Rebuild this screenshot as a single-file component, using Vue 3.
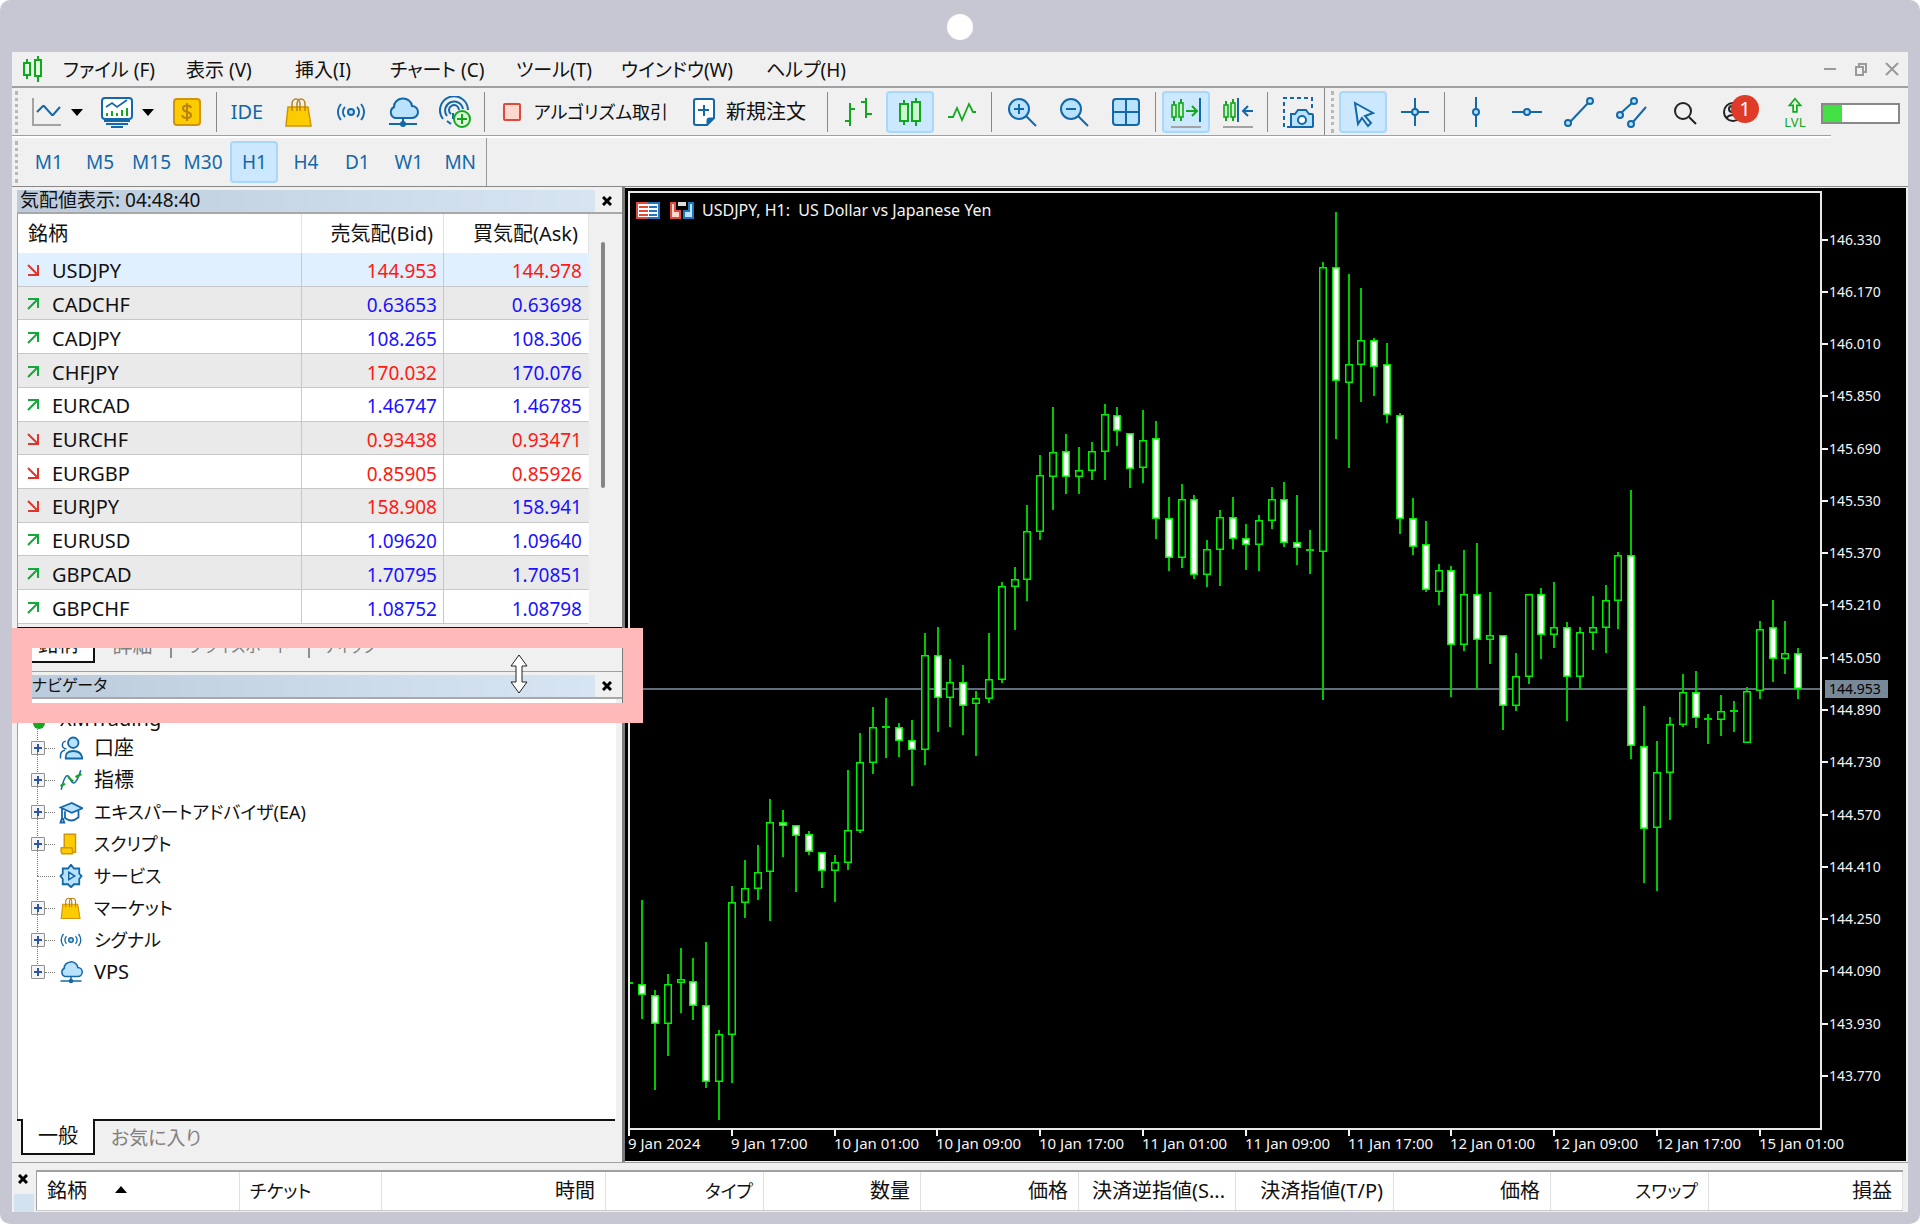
<script setup>
const menus = ['ファイル (F)', '表示 (V)', '挿入(I)', 'チャート (C)', 'ツール(T)', 'ウインドウ(W)', 'ヘルプ(H)']

const blue = '#1268a8'
const green = '#12a81e'
const s = (d, color = blue, fill = 'none', w = 2) =>
  `<path d="${d}" fill="${fill}" stroke="${color}" stroke-width="${w}"/>`
const circle = (x, y, r, color = blue, fill = 'none', w = 2) =>
  `<circle cx="${x}" cy="${y}" r="${r}" fill="${fill}" stroke="${color}" stroke-width="${w}"/>`

const bag =
  s('M5 11h20l3 19H3z', '#cf9408', '#fccb00', 1.5) +
  s('M9 15V8a4 5 0 0 1 8 0v7M14 15V8a4 5 0 0 1 8 0v7', '#b98210', 'none', 1.5)
const cloud =
  s('M8 22a6 6 0 0 1-1-11 9 8 0 0 1 18-1 6 6 0 0 1 0 12z', blue, '#b8e2fd') +
  s('M16 22v5M2 28h28', blue) + circle(16, 28, 2, blue, blue)
const signal =
  circle(16, 16, 3, blue, '#b8e2fd') +
  s('M10 11a7 7 0 0 0 0 10M22 11a7 7 0 0 1 0 10M6 8a12 12 0 0 0 0 16M26 8a12 12 0 0 1 0 16', blue, 'none', 1.8)

const icons = {
  line: s('M3 2v27h28', '#a3a3a3') + s('M7 16l6-6h1l8 9h1l7-8'),
  chart:
    '<rect x="1" y="2" width="30" height="21" rx="3" fill="#fff" stroke="#1268a8" stroke-width="2"/>' +
    s('M5 11l6-4 5 4 10-7', blue, 'none', 1.8) +
    s('M6 17v3M11 15v5M16 17v3M21 14v6M26 12v8', green) +
    s('M3 25h26M5 28h22M10 31h12', blue),
  dollar:
    '<rect x="3" y="3" width="26" height="26" rx="3" fill="#fccb00" stroke="#cf9408" stroke-width="2"/>' +
    s('M20 12c-1-4-9-3-8 1s8 2 8 6-8 4-9 0M16 7v18', '#b98210'),
  bag, cloud, signal,
  radar:
    s('M4 23A14 14 0 1 1 29 14M8 20a9 9 0 1 1 16-7M12 18a5 5 0 1 1 8-4', blue, 'none', 2) +
    s('M14 17v6M8 25l4 3', blue) +
    circle(23, 23, 8, green, '#dff6dc') + s('M23 18v10M18 23h10', green),
  stop: '<rect x="8" y="8" width="16" height="16" rx="1" fill="#ffd9cf" stroke="#e04a3a" stroke-width="2"/>',
  doc:
    s('M6 5q0-2 2-2h16q2 0 2 2v17l-7 7H8q-2 0-2-2z', blue, '#fff') +
    s('M26 22l-7 7v-5q0-2 2-2z', blue, blue, 1) + s('M16 9v11M10 14h11'),
  bars: s('M8 7v23M8 13h5M3 25h5M24 2v20M19 6h5M24 18h6', green),
  candles: s('M10 4v25M22 2v28', green) +
    '<rect x="6" y="8" width="8" height="17" fill="#cdf5cf" stroke="#12a81e" stroke-width="2"/><rect x="18" y="6" width="8" height="19" fill="#cdf5cf" stroke="#12a81e" stroke-width="2"/>',
  zigzag: s('M2 21h5l4-9 5 12 7-16 4 8h3', green, 'none', 1.8),
  zoomIn: circle(13, 13, 10, blue, '#b8e2fd') + s('M20 20l10 10M13 8v10M8 13h10'),
  zoomOut: circle(13, 13, 10, blue, '#b8e2fd') + s('M20 20l10 10M8 13h10'),
  grid: '<rect x="3" y="3" width="26" height="26" rx="3" fill="#b8e2fd" stroke="#1268a8" stroke-width="2"/>' + s('M16 3v26M3 16h26'),
  autoscroll: s('M4 5v20M11 3v22', green) +
    '<rect x="2" y="9" width="4" height="12" fill="#cdf5cf" stroke="#12a81e" stroke-width="1.6"/><rect x="9" y="7" width="4" height="14" fill="#cdf5cf" stroke="#12a81e" stroke-width="1.6"/>' +
    s('M16 15h10M22 10l5 5-5 5', green) + s('M30 2v24') + s('M1 31h30', '#a3a3a3'),
  shift: s('M4 5v20M11 3v22', green) +
    '<rect x="2" y="9" width="4" height="12" fill="#cdf5cf" stroke="#12a81e" stroke-width="1.6"/><rect x="9" y="7" width="4" height="14" fill="#cdf5cf" stroke="#12a81e" stroke-width="1.6"/>' +
    s('M16 2v24') + s('M31 15H21M26 10l-5 5 5 5') + s('M1 31h30', '#a3a3a3'),
  camera:
    '<path d="M9 31H2V2h28v10" fill="none" stroke="#1268a8" stroke-width="2" stroke-dasharray="4 3"/>' +
    s('M9 18h4l3-4h8l3 4h3q1 0 1 2v10q0 1-2 1H11q-2 0-2-1z', blue, '#b8e2fd') + circle(20, 24, 4, blue, '#fff'),
  cursor: s('M8 7l18 10-8 3 6 7-3 3-6-8-4 6z', blue, '#d9efff'),
  cross: s('M16 2v11M16 19v11M2 16h11M19 16h11') + circle(16, 16, 3, blue, '#b8e2fd'),
  vline: s('M17 1v12M17 19v12') + circle(17, 16, 3, blue, '#b8e2fd'),
  hline: s('M1 16h12M19 16h12') + circle(16, 16, 3, blue, '#b8e2fd'),
  trend: s('M7 26L26 6') + circle(5, 27, 3, blue, '#b8e2fd') + circle(27, 5, 3, blue, '#b8e2fd'),
  parallel: s('M6 17L18 6M18 26L31 11') + circle(5, 19, 3, blue, '#b8e2fd') + circle(19, 5, 3, blue, '#b8e2fd') + circle(16, 28, 3, blue, '#b8e2fd'),
  search: circle(16, 15, 8, '#222') + s('M22 21l7 7', '#222'),
  user: circle(14, 16, 9, '#222') + circle(13, 13, 3, '#222') + s('M7 22q6-6 13 0', '#222'),
  levels: s('M14 18v-7h-4l6-7 6 7h-4v7z', green, '#dff6dc', 1.8),
  people:
    s('M2 30v-4q0-6 6-7M10 17a5 5 0 0 1-1-10', blue) + circle(19, 9, 7, blue, '#b8e2fd', 2.4) +
    s('M9 30q-1-10 10-10t12 10z', blue, '#b8e2fd', 2.4),
  indicator: s('M3 29Q9 1 15 15t14-12', blue) + s('M2 24l6-3M12 12l7 6M22 12l8-4', green, 'none', 3),
  hat: s('M2 10l15-6 14 7-14 6z', blue, '#b8e2fd', 2.4) + s('M8 15v9q9 7 18-1v-9M4 12v12l-2 6h5l-2-6', blue, 'none', 2.4),
  script: s('M7 3h15v24H7z', '#cf9408', '#fccb00') + s('M3 21h14l1 2v6H4q-2-4-1-8z', '#cf9408', '#fccb00'),
  gear:
    s('M16 1l4 5h7v7l3 3-3 4v7h-7l-4 4-4-4H5v-7l-3-4 3-3V6h7z', blue, '#b8e2fd', 2.4) +
    s('M13 11l8 5-8 5z', blue, '#d9efff')
}

const tools = [
  { i: 'line', l: 'ライン', k: 'split' }, { i: 'chart', l: 'チャート種類', k: 'split' }, { i: 'dollar', l: '口座' }, { k: 'sep' },
  { t: 'IDE', k: 'ide' }, { i: 'bag', l: 'マーケット' }, { i: 'signal', l: 'シグナル' }, { i: 'cloud', l: 'VPS' }, { i: 'radar', l: '接続' }, { k: 'sep' },
  { i: 'stop', t: 'アルゴリズム取引', k: 'wide algo' }, { i: 'doc', t: '新規注文', k: 'wide order' }, { k: 'sep' },
  { i: 'bars', l: 'バーチャート' }, { i: 'candles', l: 'ローソク足', on: true }, { i: 'zigzag', l: '折れ線' }, { k: 'sep' },
  { i: 'zoomIn', l: '拡大' }, { i: 'zoomOut', l: '縮小' }, { i: 'grid', l: '整列' }, { k: 'sep' },
  { i: 'autoscroll', l: '自動スクロール', on: true }, { i: 'shift', l: 'チャートシフト' }, { k: 'sep' },
  { i: 'camera', l: 'スクリーンショット' }, { k: 'edge' }, { k: 'grip' },
  { i: 'cursor', l: 'カーソル', on: true }, { i: 'cross', l: '十字線' }, { k: 'sep' },
  { i: 'vline', l: '垂直線' }, { i: 'hline', l: '水平線' }, { i: 'trend', l: 'トレンドライン' }, { i: 'parallel', l: 'チャネル' },
  { i: 'search', l: '検索' }, { i: 'user', l: '通知', badge: '1' }, { i: 'levels', t: 'LVL', k: 'lvl' }
]

const frames = ['M1', 'M5', 'M15', 'M30', 'H1', 'H4', 'D1', 'W1', 'MN']

// symbol, bid, ask, trend (u/d), bid colour, ask colour
const quotes = [
  ['USDJPY', '144.953', '144.978', 'd', 'r', 'r'],
  ['CADCHF', '0.63653', '0.63698', 'u', 'b', 'b'],
  ['CADJPY', '108.265', '108.306', 'u', 'b', 'b'],
  ['CHFJPY', '170.032', '170.076', 'u', 'r', 'b'],
  ['EURCAD', '1.46747', '1.46785', 'u', 'b', 'b'],
  ['EURCHF', '0.93438', '0.93471', 'd', 'r', 'r'],
  ['EURGBP', '0.85905', '0.85926', 'd', 'r', 'r'],
  ['EURJPY', '158.908', '158.941', 'd', 'r', 'b'],
  ['EURUSD', '1.09620', '1.09640', 'u', 'b', 'b'],
  ['GBPCAD', '1.70795', '1.70851', 'u', 'b', 'b'],
  ['GBPCHF', '1.08752', '1.08798', 'u', 'b', 'b']
]

const tree = [
  { icon: 'people', label: '口座' },
  { icon: 'indicator', label: '指標' },
  { icon: 'hat', label: 'エキスパートアドバイザ(EA)', kana: true },
  { icon: 'script', label: 'スクリプト', kana: true },
  { icon: 'gear', label: 'サービス', kana: true, leaf: true },
  { icon: 'bag', label: 'マーケット', kana: true },
  { icon: 'signal', label: 'シグナル', kana: true },
  { icon: 'cloud', label: 'VPS' }
]

// high, body top, body bottom, low, 1 = falling
const candles = [
  [900,984,995,1019,1],[990,995,1024,1090,1],[974,984,1024,1056,0],[948,979,983,1013,0],[958,981,1006,1020,1],
  [942,1005,1082,1088,1],[1030,1034,1082,1120,0],[886,902,1035,1083,0],[860,888,903,918,0],[845,872,889,900,0],
  [799,822,872,921,0],[810,822,826,857,1],[825,825,836,892,1],[831,834,852,855,1],[852,852,871,888,1],
  [855,862,871,902,0],[770,830,863,870,0],[733,762,831,833,0],[707,727,763,774,0],[698,727,727,758,0],
  [723,727,741,757,1],[720,740,750,786,1],[633,655,750,765,0],[627,655,698,732,1],[659,682,698,727,0],
  [665,682,706,735,1],[691,698,704,756,0],[633,679,699,703,0],[582,586,680,683,0],[567,579,587,630,0],
  [505,531,580,601,0],[455,475,532,540,0],[407,452,477,510,0],[434,451,477,494,1],[447,470,477,494,0],
  [442,451,471,480,0],[404,414,452,480,0],[407,415,431,446,1],[433,433,469,488,1],[410,440,468,483,0],
  [421,438,519,539,1],[497,518,558,571,1],[484,499,558,568,0],[495,499,575,579,1],[540,549,575,587,0],
  [510,517,550,586,0],[497,517,539,549,1],[524,538,545,570,1],[515,520,545,571,0],[487,499,521,529,0],
  [482,499,543,547,1],[495,542,548,565,1],[530,550,550,574,0],[262,267,552,700,0],[212,267,381,439,1],
  [274,364,383,468,0],[288,340,365,402,0],[338,340,367,396,1],[343,364,415,423,1],[413,415,519,534,1],
  [498,518,547,555,1],[521,544,590,592,1],[564,570,592,605,0],[566,570,645,697,1],[550,594,645,651,0],
  [543,594,640,689,1],[592,635,640,664,0],[635,635,706,730,1],[653,676,706,711,0],[594,594,677,684,0],
  [588,594,635,659,1],[582,627,635,648,0],[622,627,677,721,1],[627,632,677,689,0],[596,627,633,650,0],
  [585,600,628,653,0],[552,555,601,629,0],[490,555,746,759,1],[706,746,829,883,1],[741,772,828,891,0],
  [717,724,773,820,0],[674,692,725,727,0],[671,692,718,728,1],[714,719,719,744,0],[695,711,720,736,0],
  [701,711,711,732,0],[687,691,743,743,0],[621,629,691,699,0],[600,627,659,682,1],[621,653,659,674,0],
  [648,653,689,699,1]
].map(([high, top, bottom, low, down], i) => ({ x: Math.round(642 + i * 12.848), high, top, bottom, low, down }))

const prices = ['146.330', '146.170', '146.010', '145.850', '145.690', '145.530', '145.370', '145.210', '145.050',
  '144.890', '144.730', '144.570', '144.410', '144.250', '144.090', '143.930', '143.770']
  .map((label, i) => ({ label, y: Math.round(238.6 + i * 52.27) }))

const times = ['9 Jan 2024', '9 Jan 17:00', '10 Jan 01:00', '10 Jan 09:00', '10 Jan 17:00', '11 Jan 01:00', '11 Jan 09:00',
  '11 Jan 17:00', '12 Jan 01:00', '12 Jan 09:00', '12 Jan 17:00', '15 Jan 01:00']
  .map((label, i) => ({ label, x: Math.round(629 + i * 102.8) }))

const orderCols = [
  { label: '銘柄', width: 204 }, { label: 'チケット', width: 142, kana: true }, { label: '時間', width: 224 },
  { label: 'タイプ', width: 158, kana: true }, { label: '数量', width: 157 }, { label: '価格', width: 158 },
  { label: '決済逆指値(S...', width: 157 }, { label: '決済指値(T/P)', width: 158 }, { label: '価格', width: 157 },
  { label: 'スワップ', width: 158, kana: true }, { label: '損益' }
]
</script>

<template>
  <div class="device">
    <div class="lens"></div>
    <div class="window">
      <header class="menubar">
        <svg class="logo" viewBox="0 0 24 28">
          <path d="M6 4v20M17 1v26" stroke="#12a81e" stroke-width="2" />
          <rect x="3" y="8" width="6" height="12" fill="#e4fbe4" stroke="#12a81e" stroke-width="2" />
          <rect x="14" y="5" width="6" height="16" fill="#e4fbe4" stroke="#12a81e" stroke-width="2" />
        </svg>
        <nav class="menus">
          <button v-for="m in menus" :key="m" type="button">{{ m }}</button>
        </nav>
        <div class="controls">
          <button type="button" aria-label="最小化"><svg viewBox="0 0 14 14"><path d="M1 7h12" /></svg></button>
          <button type="button" aria-label="元に戻す"><svg viewBox="0 0 14 14"><path d="M2 5h7v8H2zM5 5V2h7v8H9" /></svg></button>
          <button type="button" aria-label="閉じる"><svg viewBox="0 0 14 14"><path d="M1 1l12 12M13 1L1 13" /></svg></button>
        </div>
      </header>

      <div class="toolbar">
        <span class="grip"></span>
        <template v-for="(t, n) in tools" :key="n">
          <span v-if="['sep', 'edge', 'grip'].includes(t.k)" :class="t.k"></span>
          <button v-else type="button" class="tool" :class="[t.k, { on: t.on }]" :aria-label="t.l">
            <svg v-if="t.i" class="ico" viewBox="0 0 32 32" v-html="icons[t.i]"></svg>
            <span v-if="t.t">{{ t.t }}</span>
            <svg v-if="t.k === 'split'" class="caret" viewBox="0 0 12 7"><path d="M0 0h12L6 7z" /></svg>
            <span v-if="t.badge" class="badge">{{ t.badge }}</span>
          </button>
        </template>
        <div class="meter"><div class="meter-fill"></div></div>
      </div>

      <div class="frames">
        <span class="grip"></span>
        <div class="frame-list">
          <button v-for="f in frames" :key="f" type="button"><span :class="{ on: f === 'H1' }">{{ f }}</span></button>
        </div>
      </div>

      <main class="main">
        <div class="side">
          <div class="caption">
            <h2>気配値表示: 04:48:40</h2>
            <button type="button" aria-label="閉じる"><svg viewBox="0 0 10 10"><path d="M1 1l8 8M9 1L1 9" /></svg></button>
          </div>
          <div class="quotes">
            <table>
              <colgroup><col class="c-symbol" /><col class="c-bid" /><col /></colgroup>
              <thead>
                <tr><th>銘柄</th><th>売気配(Bid)</th><th>買気配(Ask)</th></tr>
              </thead>
              <tbody>
                <tr v-for="q in quotes" :key="q[0]">
                  <td>
                    <svg class="dir" :class="q[3]" viewBox="0 0 12 12">
                      <path :d="q[3] === 'u' ? 'M1 11L11 1M1 1h10v9' : 'M1 1l10 10M11 1v10H1'" />
                    </svg>{{ q[0] }}
                  </td>
                  <td :class="q[4]">{{ q[1] }}</td>
                  <td :class="q[5]">{{ q[2] }}</td>
                </tr>
              </tbody>
            </table>
            <div class="scroll"><div class="thumb"></div></div>
          </div>
          <div class="tabs upper">
            <button type="button" class="on">銘柄</button>
            <button type="button" class="detail">詳細</button>
            <button type="button" class="board">プライスボード</button>
            <button type="button" class="tick">ティック</button>
          </div>
          <div class="caption">
            <h2 class="nav-title">ナビゲータ</h2>
            <button type="button" aria-label="閉じる"><svg viewBox="0 0 10 10"><path d="M1 1l8 8M9 1L1 9" /></svg></button>
          </div>
          <ul class="tree">
            <li class="root">
              <svg class="root-ico" viewBox="0 0 24 24"><circle cx="13" cy="5" r="5" fill="#fccb00" /><circle cx="8" cy="16" r="6" fill="#12a81e" /></svg>XMTrading
            </li>
            <li v-for="n in tree" :key="n.label" :class="{ kana: n.kana }">
              <span v-if="!n.leaf" class="plus"></span>
              <span class="dots" :class="{ long: n.leaf }"></span>
              <svg class="node" viewBox="0 0 32 32" v-html="icons[n.icon]"></svg>{{ n.label }}
            </li>
          </ul>
          <div class="tabs lower">
            <button type="button" class="on">一般</button>
            <button type="button">お気に入り</button>
          </div>
          <div class="highlight">
            <svg class="resize" viewBox="0 0 18 40"><path d="M9 1l8 11h-5v16h5L9 39 1 28h5V12H1z" /></svg>
          </div>
        </div>

        <svg class="plot" viewBox="622 187 1286 975">
          <rect x="622" y="187" width="1286" height="975" fill="#efefef" />
          <rect x="622" y="187" width="3" height="975" fill="#7c7c7c" />
          <rect x="625" y="188" width="1281" height="973" fill="#000" />
          <path d="M629 1136V192H1821V1129H629" fill="none" stroke="#e8e8e8" stroke-width="2" />
          <rect x="630" y="688" width="1190" height="2" fill="#5f6e7b" />
          <rect x="630" y="982" width="3" height="2" fill="#00dc00" />
          <g v-for="c in candles" :key="c.x">
            <rect :x="c.x - 1" :y="c.high" width="2" :height="c.low - c.high" fill="#00c800" />
            <rect v-if="c.bottom - c.top < 3" :x="c.x - 4" :y="c.top - 1" width="8" height="2" fill="#00dc00" />
            <rect v-else :x="c.x - 3.25" :y="c.top + 0.75" width="6.5" :height="c.bottom - c.top - 1.5"
              :fill="c.down ? '#fff' : '#000'" stroke="#00ee00" stroke-width="1.5" />
          </g>
          <g class="axis">
            <g v-for="p in prices" :key="p.label">
              <rect x="1822" :y="p.y" width="6" height="2" />
              <text x="1829" :y="p.y + 6">{{ p.label }}</text>
            </g>
            <g v-for="t in times" :key="t.label" class="time">
              <rect :x="t.x - 1" y="1129" width="2" height="7" />
              <text :x="t.x - 1" y="1149">{{ t.label }}</text>
            </g>
            <text class="heading" x="702" y="216">USDJPY, H1:&nbsp; US Dollar vs Japanese Yen</text>
          </g>
          <rect x="1825" y="680" width="63" height="18" fill="#778899" />
          <text class="now" x="1829" y="694">144.953</text>
          <g stroke-width="2">
            <path d="M648 203h-11v15h11" fill="#fff" stroke="#e04a3a" />
            <path d="M648 203h11v15h-11" fill="#fff" stroke="#1e78c0" />
            <path d="M639 207h9M639 211h9M639 215h9" stroke="#e04a3a" />
            <path d="M649 207h8M649 211h8M649 215h8" stroke="#1e78c0" />
            <path d="M671 203h4v8h5v7h-9z" fill="#ffd9cf" stroke="#e04a3a" />
            <path d="M693 203h-4v8h-5v7h9z" fill="#b8e2fd" stroke="#1e78c0" />
            <path d="M678 204h8" stroke="#ddd" stroke-width="4" />
          </g>
        </svg>
      </main>

      <footer class="terminal">
        <div class="rail">
          <button type="button" aria-label="閉じる"><svg viewBox="0 0 10 10"><path d="M1 1l8 8M9 1L1 9" /></svg></button>
        </div>
        <table>
          <colgroup><col v-for="(c, n) in orderCols" :key="n" :style="c.width ? { width: c.width + 'px' } : null" /></colgroup>
          <thead>
            <tr>
              <th v-for="(c, n) in orderCols" :key="n" :class="{ kana: c.kana }">{{ c.label }}<svg v-if="n === 0" class="sort" viewBox="0 0 12 7"><path d="M0 7h12L6 0z" /></svg></th>
            </tr>
          </thead>
        </table>
      </footer>
    </div>
  </div>
</template>

<style>
body { background: #fff; }
</style>

<style scoped>
* { box-sizing: border-box; }
.device {
  padding: 0 12px 12px;
  background: #c7c7d4;
  border-radius: 10px;
  font-family: "Noto Sans", "Noto Sans CJK JP", sans-serif;
  font-feature-settings: "palt";
  font-size: 20px;
  line-height: 24px;
  color: #111;
}
.device::before { content: ""; display: block; height: 14px; }
.lens { width: 26px; height: 26px; margin: 0 auto; border-radius: 50%; background: #fff; }
.window { margin-top: 12px; background: #f0f0f0; }
button { padding: 0; border: 0; background: none; font: inherit; color: inherit; white-space: nowrap; font-feature-settings: inherit; }

.menubar { display: flex; align-items: center; height: 36px; padding: 0 9px; border-bottom: 2px solid #a0a0a0; }
.logo { width: 24px; height: 28px; }
.menus { display: grid; grid-template-columns: 123px 109px 95px 126px 105px 145px 100px; margin-left: 18px; padding-top: 2px; font-size: 19px; }
.menus button { text-align: left; }
.controls { display: flex; gap: 17px; margin-left: auto; }
.controls svg { display: block; width: 14px; height: 14px; fill: none; stroke: #9a9a9a; stroke-width: 2; }

.toolbar { position: relative; display: flex; align-items: center; height: 50px; padding-bottom: 2px; }
.toolbar::after { content: ""; position: absolute; left: 0; right: 77px; bottom: 0; height: 2px; border-top: 1px solid #a0a0a0; background: #fff; }
.grip { width: 3px; height: 42px; margin: 0 1px 0 3px; border-left: 3px dotted #b8b8b8; }
.toolbar > .grip:not(:first-child) { margin: 0 3px 0 6px; }
.sep { width: 1px; height: 40px; margin: 0 4px 0 3px; background: #888; }
.edge { width: 1px; height: 48px; background: #888; }
.tool { position: relative; display: flex; align-items: center; justify-content: center; flex: none; width: 48px; height: 42px; margin: 0 2px; }
.ico { display: block; flex: none; width: 32px; height: 32px; }
.on.tool, .frame-list .on { border: 2px solid #a6d8ff; border-radius: 4px; background: #cce8ff; }
.split { width: 71px; margin: 0; justify-content: flex-start; gap: 9px; padding-left: 11px; }
.caret { width: 12px; height: 7px; }
.ide { color: #1268a8; }
.wide { margin: 0; justify-content: flex-start; padding-left: 7px; gap: 6px; }
.algo { width: 191px; font-size: 18px; }
.order { width: 144px; padding-left: 8px; }
.lvl { flex-direction: column; margin-left: 10px; font-size: 13px; line-height: 14px; color: #12a81e; }
.lvl .ico { height: 30px; margin-bottom: -10px; }
.badge { position: absolute; left: 20px; top: 4px; width: 28px; height: 28px; border-radius: 50%; background: #de3b28; color: #fff; line-height: 28px; text-align: center; }
.meter { width: 80px; height: 21px; margin-left: auto; margin-right: 8px; margin-top: 2px; border: 2px solid #888; background: #fff; }
.meter-fill { width: 25%; height: 100%; background: #42e042; }

.frames { display: flex; align-items: center; height: 49px; border-bottom: 1px solid #888; color: #1268a8; font-size: 19px; }
.frame-list { display: flex; width: 468px; height: 48px; padding: 0 0 0 4px; border-right: 1px solid #999; }
.frame-list button { display: flex; flex: 1; align-items: center; justify-content: center; }
.frame-list span { width: 48px; height: 42px; line-height: 42px; }
.frame-list .on { line-height: 38px; }

.main { display: flex; }
.side { position: relative; display: flex; flex-direction: column; flex: none; width: 610px; padding-left: 5px; }
.caption { display: flex; height: 27px; padding-top: 3px; padding-right: 3px; border-bottom: 2px solid #a8a8a8; }
.caption h2 { flex: 1; margin: 0; padding-left: 3px; background: linear-gradient(90deg, #bccbdb, #d7e5f3); font-size: 19px; font-weight: 400; line-height: 21px; }
.caption .nav-title { padding-left: 15px; font-size: 16px; }
.caption button { display: flex; align-items: center; justify-content: center; width: 24px; }
.caption svg, .rail svg { width: 10px; height: 10px; stroke: #000; stroke-width: 3; }
.quotes { display: flex; height: 414px; border-left: 1px solid #a0a0a0; border-bottom: 1px solid #111; }
.quotes table { width: 571px; height: 410px; table-layout: fixed; border-collapse: separate; border-spacing: 0; background: #fff; font-size: 19px; }
.c-symbol { width: 284px; }
.c-bid { width: 142px; }
.quotes th { height: 39px; padding: 0 10px 0 9px; border-right: 1px solid #e2e2e2; font-size: 20px; font-weight: 400; text-align: right; }
.quotes th:first-child { padding-left: 10px; text-align: left; }
.quotes td { padding: 4px 6px 0 9px; border-right: 1px solid #c8c8c8; border-bottom: 1px solid #c8c8c8; text-align: right; line-height: 24px; }
.quotes td:first-child { font-size: 20px; text-align: left; }
.quotes td:last-child { border-right-color: transparent; }
.quotes tr:nth-child(even) td { background: #eaeaea; }
.quotes tbody tr:first-child td { background: #e0f0fe; }
.r { color: #ff1a12; }
.b { color: #1a12ff; }
.dir { width: 12px; height: 12px; margin-right: 13px; fill: none; stroke-width: 2; vertical-align: 2px; }
.u { stroke: #12a83a; }
.d { stroke: #e0352a; }
.scroll { flex: 1; padding: 28px 0 0 12px; }
.thumb { width: 4px; height: 246px; border-radius: 2px; background: #868686; }
.tabs { display: flex; align-items: flex-start; padding-left: 4px; font-size: 19px; color: #808080; }
.tabs button { height: 34px; padding: 0 16px; line-height: 32px; }
.tabs .on { width: 74px; border: 2px solid #111; border-top: 0; background: #fff; color: #111; padding: 0; font-size: 20px; }
.upper { flex: none; height: 44px; border-bottom: 1px solid #a0a0a0; }
.upper button { position: relative; height: 35px; padding: 0 16px; line-height: 34px; }
.upper .detail { width: 75px; font-size: 20px; }
.upper .board { width: 138px; font-size: 16px; }
.upper .tick { font-size: 16px; }
.board::before, .tick::before { content: ""; position: absolute; left: 0; top: 6px; height: 24px; border-left: 2px solid #909090; }
.lower { flex: none; height: 43px; border-top: 2px solid #111; margin-right: 7px; }
.lower .on { height: 36px; margin-top: -2px; line-height: 34px; }
.tree { flex: 1; margin: 0 6px 0 0; padding: 1px 0 0 13px; border-left: 1px solid #a0a0a0; background: #fff; list-style: none; }
.tree li { position: relative; display: flex; align-items: center; height: 32px; }
.tree .root { padding-top: 6px; }
.tree li:not(.root)::before { content: ""; position: absolute; left: 6px; top: -12px; height: 28px; border-left: 1px dotted #777; }
.tree .kana, .terminal .kana { font-size: 18px; }
.plus { position: relative; width: 14px; height: 14px; border: 1px solid #909090; border-radius: 1px; background: linear-gradient(#2f55a0, #2f55a0) center / 8px 2px no-repeat, linear-gradient(#2f55a0, #2f55a0) center / 2px 8px no-repeat, #f4f4f4; }
.dots { width: 10px; margin: 0 4px 0 0; border-top: 1px dotted #777; }
.dots.long { width: 18px; margin-left: 6px; }
.node { width: 24px; height: 24px; margin-right: 11px; }
.root-ico { width: 24px; height: 24px; margin-right: 5px; }
.highlight { position: absolute; left: 0; top: 441px; width: 631px; height: 95px; border: 20px solid #ffb9b9; }
.resize { position: absolute; left: 478px; top: 6px; width: 18px; height: 40px; fill: #fff; stroke: #222; stroke-width: 1; }

.plot { display: block; flex: 1; min-width: 0; }
.axis { fill: #f4f4f4; font-size: 14px; }
.time { font-size: 15px; }
.heading { font-size: 16px; }
.now { fill: #000; font-size: 14px; }

.terminal { display: flex; height: 50px; border-top: 1px solid #a0a0a0; }
.rail { width: 24px; background: linear-gradient(#d3e2f0, #d3e2f0) 2px 31px / 20px 19px no-repeat; }
.rail button { display: block; margin: 11px 0 0 6px; line-height: 10px; height: 10px; }
.rail svg { display: block; }
.terminal table { flex: 1; width: 0; height: 41px; margin: 7px 5px 0 0; table-layout: fixed; border-collapse: separate; border-spacing: 0; border-top: 2px solid #a0a0a0; border-bottom: 1px solid #c8c8c8; background: #fff; }
.terminal th { padding: 0 10px 0 9px; border-right: 1px solid #e0e0e0; font-weight: 400; text-align: right; white-space: nowrap; }
.terminal th:nth-child(-n+2) { text-align: left; padding-left: 10px; }
.terminal th:first-child { border-left: 1px solid #a0a0a0; }
.sort { width: 12px; height: 7px; margin-left: 28px; vertical-align: 5px; }
</style>
